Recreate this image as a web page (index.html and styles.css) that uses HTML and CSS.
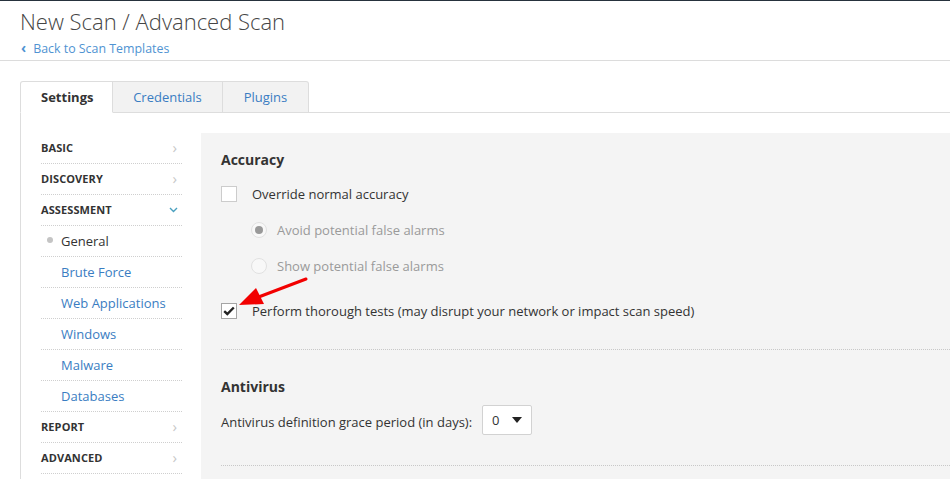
FILE: index.html
```html
<!DOCTYPE html>
<html>
<head>
<meta charset="utf-8">
<link rel="stylesheet" href="styles.css">
</head>
<body>
<div class="page">
  <header class="header">
    <h1 class="title">New Scan / Advanced Scan</h1>
    <a class="back" href="#"><span class="back-chev">‹</span>Back to Scan Templates</a>
  </header>

  <main class="main">
    <nav class="tabs">
      <div class="tab tab-active">Settings</div>
      <div class="tab">Credentials</div>
      <div class="tab">Plugins</div>
      <div class="tab-fill"></div>
    </nav>

    <section class="panel">
      <aside class="sidebar">
        <div class="side-item side-head"><span>BASIC</span><span class="chev">›</span></div>
        <div class="side-item side-head"><span>DISCOVERY</span><span class="chev">›</span></div>
        <div class="side-item side-head"><span>ASSESSMENT</span>
          <svg class="chev-down" width="9" height="6" viewBox="0 0 9 6"><path d="M1 1 L4.5 4.5 L8 1" fill="none" stroke="#4aa0bf" stroke-width="1.4"/></svg>
        </div>
        <div class="side-item side-sub current"><span class="dot"></span>General</div>
        <div class="side-item side-sub">Brute Force</div>
        <div class="side-item side-sub">Web Applications</div>
        <div class="side-item side-sub">Windows</div>
        <div class="side-item side-sub">Malware</div>
        <div class="side-item side-sub">Databases</div>
        <div class="side-item side-head"><span>REPORT</span><span class="chev">›</span></div>
        <div class="side-item side-head"><span>ADVANCED</span><span class="chev">›</span></div>
      </aside>

      <div class="content">
        <h2 class="section-title">Accuracy</h2>
        <div class="row">
          <span class="checkbox"></span>
          <span class="label">Override normal accuracy</span>
        </div>
        <div class="row row-indent">
          <span class="radio checked"></span>
          <span class="label muted">Avoid potential false alarms</span>
        </div>
        <div class="row row-indent">
          <span class="radio"></span>
          <span class="label muted">Show potential false alarms</span>
        </div>
        <div class="row row-thorough">
          <span class="checkbox is-checked">
            <svg width="12" height="10" viewBox="0 0 12 10"><path d="M1.2 5.2 L4.3 8 L10.8 1.5" fill="none" stroke="#222" stroke-width="2.4"/></svg>
          </span>
          <span class="label">Perform thorough tests (may disrupt your network or impact scan speed)</span>
        </div>
        <div class="divider"></div>

        <h2 class="section-title section-title-2">Antivirus</h2>
        <div class="field-row">
          <span class="label-plain">Antivirus definition grace period (in days):</span>
          <div class="select">
            <span>0</span>
            <svg width="10" height="6" viewBox="0 0 10 6"><path d="M0 0 L10 0 L5 6 Z" fill="#222"/></svg>
          </div>
        </div>
        <div class="divider divider-2"></div>
      </div>
    </section>
  </main>

  <svg class="annotation" width="950" height="479" viewBox="0 0 950 479">
    <line x1="306" y1="278" x2="256" y2="297" stroke="#f20000" stroke-width="3" stroke-linecap="round"/>
    <polygon points="239,304 256,287 264,303" fill="#f20000"/>
  </svg>
</div>
</body>
</html>
```

FILE: styles.css
```css
* { box-sizing: border-box; }

html, body {
  margin: 0;
  padding: 0;
  background: #ffffff;
  font-family: "Open Sans", "Liberation Sans", sans-serif;
  color: #333333;
}

.page {
  position: relative;
  width: 950px;
  height: 479px;
  overflow: hidden;
  border-top: 1px solid #26323d;
}

.header {
  height: 60px;
  padding: 0 20px;
  border-bottom: 1px solid #dcdcdc;
}

.title {
  margin: 0;
  padding-top: 5px;
  font-size: 22px;
  font-weight: 300;
  line-height: 30px;
  color: #454545;
}

.back {
  display: inline-block;
  margin-top: 3px;
  font-size: 12.4px;
  line-height: 18px;
  color: #4f93d2;
  text-decoration: none;
}

.back-chev {
  font-weight: 700;
  font-size: 14px;
  margin-right: 7px;
  margin-left: 1px;
}

.main {
  padding: 20px 0 0 20px;
}

.tabs {
  display: flex;
  height: 32px;
}

.tab {
  height: 32px;
  padding: 0 20px;
  font-size: 13px;
  line-height: 31px;
  color: #3a7dc2;
  background: #f2f2f2;
  border: 1px solid #dddddd;
  border-left: none;
  text-align: center;
}

.tab:nth-child(3) {
  border-top-right-radius: 3px;
}

.tab-active {
  color: #333333;
  font-weight: 700;
  background: #ffffff;
  border-left: 1px solid #dddddd;
  border-bottom: 1px solid transparent;
  border-top-left-radius: 3px;
  width: 93px;
}

.tab:nth-child(2) { width: 110px; }
.tab:nth-child(3) { width: 86px; }

.tab-fill {
  flex: 1;
  border-bottom: 1px solid #dddddd;
}

.panel {
  display: flex;
  border-left: 1px solid #dddddd;
  padding-top: 20px;
  height: 400px;
}

.sidebar {
  width: 180px;
  padding-left: 20px;
  padding-right: 19px;
  flex-shrink: 0;
}

.side-item {
  display: flex;
  align-items: center;
  height: 31px;
  padding-bottom: 1px;
  border-bottom: 1px dotted #cfcfcf;
  font-size: 13px;
}

.side-head {
  justify-content: space-between;
  font-size: 11px;
  font-weight: 700;
  color: #333333;
  letter-spacing: 0.1px;
}

.chev {
  font-size: 15px;
  font-weight: 400;
  color: #c8c8c8;
  margin-right: 5px;
  line-height: 1;
}

.chev-down {
  margin-right: 4px;
}

.side-sub {
  padding-left: 20px;
  color: #3a7dc2;
}

.side-sub.current {
  color: #333333;
  position: relative;
}

.dot {
  position: absolute;
  left: 6px;
  top: 11px;
  width: 6px;
  height: 6px;
  border-radius: 50%;
  background: #c4c4c4;
}

.content {
  flex: 1;
  background: #f4f4f4;
  padding: 17px 0 0 20px;
}

.section-title {
  margin: 0;
  font-size: 14px;
  font-weight: 700;
  line-height: 20px;
  color: #333333;
}

.row {
  display: flex;
  align-items: center;
  height: 36px;
  font-size: 13px;
}

.row:first-of-type { margin-top: 6px; }

.row-indent {
  padding-left: 30px;
}

.row-thorough {
  margin-top: 9px;
}

.checkbox {
  display: inline-flex;
  align-items: center;
  justify-content: center;
  width: 16px;
  height: 16px;
  background: #ffffff;
  border: 1px solid #cccccc;
  margin-right: 15px;
}

.checkbox.is-checked {
  border-color: #a5a5a5;
}

.radio {
  position: relative;
  width: 16px;
  height: 16px;
  border-radius: 50%;
  background: #f8f8f8;
  border: 1px solid #e1e1e1;
  margin-right: 10px;
}

.radio.checked::after {
  content: "";
  position: absolute;
  left: 3px;
  top: 3px;
  width: 8px;
  height: 8px;
  border-radius: 50%;
  background: #999999;
}

.label { color: #333333; }
.label.muted { color: #9a9a9a; }

.divider {
  margin-top: 20px;
  border-top: 1px dotted #c8c8c8;
}

.section-title-2 {
  margin-top: 27px;
}

.field-row {
  display: flex;
  align-items: center;
  margin-top: 8px;
  font-size: 13px;
}

.label-plain {
  margin-right: 10px;
  padding-top: 3px;
}

.select {
  display: flex;
  align-items: center;
  justify-content: space-between;
  width: 50px;
  height: 30px;
  padding: 0 9px 0 9px;
  background: #ffffff;
  border: 1px solid #d2d2d2;
  border-radius: 2px;
  font-size: 13px;
}

.divider-2 {
  margin-top: 30px;
}

.annotation {
  position: absolute;
  left: 0;
  top: 0;
  pointer-events: none;
}
```
